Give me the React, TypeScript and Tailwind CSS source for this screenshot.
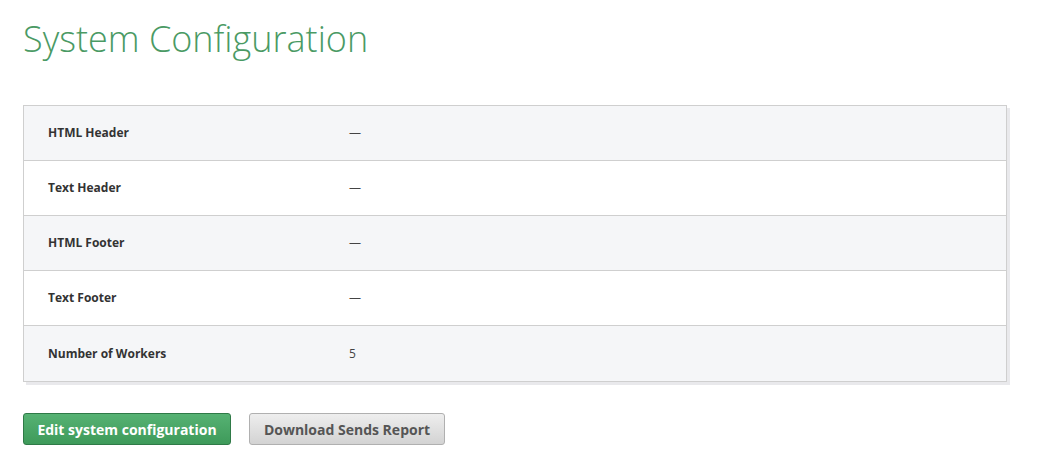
import React from "react";

const rows = [
  { label: "HTML Header", value: "—" },
  { label: "Text Header", value: "—" },
  { label: "HTML Footer", value: "—" },
  { label: "Text Footer", value: "—" },
  { label: "Number of Workers", value: "5" },
];

export default function App() {
  return (
    <div className="min-h-[470px] bg-white px-[23px] pt-[14px] font-['Open_Sans',sans-serif] text-[#333]">
      <h1 className="text-[36px] font-light leading-[50px] text-[#4a9a64]">System Configuration</h1>

      <div className="mt-[41px] w-[984px] border border-[#cfcfcf] shadow-[3px_3px_0_#e9e9ec]">
        {rows.map((r, i) => (
          <div
            key={r.label}
            className={`flex items-center ${i % 2 === 0 ? "bg-[#f5f6f8]" : "bg-white"} ${
              i === 0 ? "h-[54px]" : i === rows.length - 1 ? "h-[56px] border-t border-[#cfcfcf]" : "h-[55px] border-t border-[#cfcfcf]"
            }`}
          >
            <div className="w-[325px] pl-[24px] text-[12px] font-bold text-[#333]">{r.label}</div>
            <div className="text-[12px] text-[#444]">{r.value}</div>
          </div>
        ))}
      </div>

      <div className="mt-[31px] flex gap-[18px]">
        <button className="h-[32px] w-[208px] rounded-[3px] border border-[#2f7a47] bg-gradient-to-b from-[#56b273] to-[#3e9a5a] text-[14px] font-bold text-white">
          Edit system configuration
        </button>
        <button className="h-[32px] w-[196px] rounded-[3px] border border-[#b0b0b0] bg-gradient-to-b from-[#eeeeee] to-[#d3d3d3] text-[14px] font-bold text-[#555]">
          Download Sends Report
        </button>
      </div>
    </div>
  );
}
